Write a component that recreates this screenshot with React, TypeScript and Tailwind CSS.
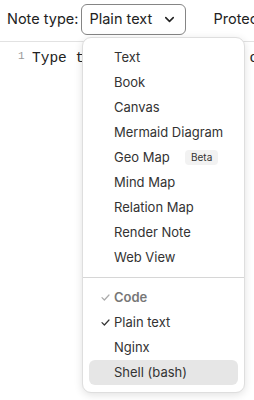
import { ChevronDown } from "lucide-react";

const noteTypes = ["Text", "Book", "Canvas", "Mermaid Diagram", "Geo Map", "Mind Map", "Relation Map", "Render Note", "Web View"];

function Check({ className }: { className: string }) {
    return (
        <svg width="9" height="7" viewBox="0 0 9 7" fill="none" className={className}>
            <path d="M1 3.6 L3.4 6 L8 1" stroke="currentColor" strokeWidth="1.2" strokeLinecap="round" strokeLinejoin="round" />
        </svg>
    );
}

function Item({ label, children, active }: { label: string; children?: React.ReactNode; active?: boolean }) {
    return (
        <div className={`relative flex items-center h-[25px] mx-[6px] pl-[25px] rounded-md text-[13px] text-[#333] ${active ? "bg-[#e6e6e6]" : ""}`}>
            {children}
            <span>{label}</span>
        </div>
    );
}

export default function App() {
    return (
        <div className="relative w-[254px] h-[400px] bg-white overflow-hidden" style={{ fontFamily: "Inter, 'Noto Sans', sans-serif" }}>
            <div className="flex items-center h-[42px] pl-[7px] pb-[3px] border-b border-[#e2e2e2] whitespace-nowrap">
                <span className="shrink-0 text-[14.5px] text-[#222]">Note type:</span>
                <div className="shrink-0 flex items-center ml-[3px] h-[31px] w-[105px] pl-[7px] border-[1.5px] border-[#858585] rounded-[6px] text-[14.5px] text-[#222]">
                    <span>Plain text</span>
                    <ChevronDown className="ml-[10px] w-[15px] h-[15px]" strokeWidth={2.5} />
                </div>
                <span className="shrink-0 ml-[27px] text-[14.5px] text-[#222]">Protected</span>
            </div>

            <div className="flex items-start pt-[7px] pl-[18px] whitespace-nowrap" style={{ fontFamily: "'Liberation Mono', monospace" }}>
                <span className="shrink-0 text-[11px] leading-[14px] text-[#999] w-[14px]">1</span>
                <span className="shrink-0 text-[14.5px] leading-[18px] text-[#222]">Type the content of your code note here...</span>
            </div>

            <div className="absolute left-[82px] top-[37px] w-[163px] py-[7px] bg-white border border-[#dedede] rounded-[9px] shadow-[0_2px_8px_rgba(0,0,0,0.12)]">
                {noteTypes.map((t) => (
                    <Item key={t} label={t}>
                        {t === "Geo Map" && (
                            <span className="absolute left-[96px] top-[5px] h-[15px] px-[6px] flex items-center rounded bg-[#f2f2f2] text-[10px] text-[#333]">Beta</span>
                        )}
                    </Item>
                ))}
                <div className="my-[7px] border-t border-[#d6d6d6]" />
                <div className="relative flex items-center h-[25px] mx-[6px] pl-[25px] text-[13px] font-semibold text-[#777]">
                    <Check className="absolute left-[12px] text-[#aaa]" />
                    <span>Code</span>
                </div>
                <Item label="Plain text">
                    <Check className="absolute left-[12px] text-[#333]" />
                </Item>
                <Item label="Nginx" />
                <Item label="Shell (bash)" active />
            </div>
        </div>
    );
}
